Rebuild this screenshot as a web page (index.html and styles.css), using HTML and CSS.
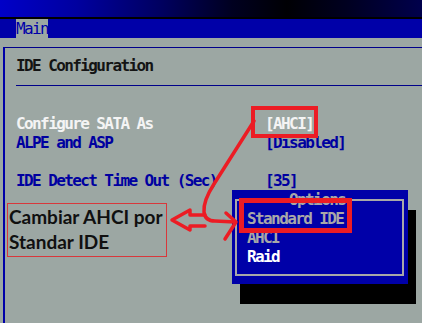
FILE: index.html
```html
<!DOCTYPE html>
<html lang="es">
<head>
<meta charset="utf-8">
<title>IDE Configuration</title>
<link rel="stylesheet" href="styles.css">
</head>
<body>
<div class="screen">
  <div class="titlebar"></div>
  <div class="menubar"><span class="tab">Main</span></div>
  <div class="content">
    <div class="panel">
      <div class="panel-head">IDE Configuration</div>
      <div class="rows">
        <div class="row"><span class="label sel">Configure SATA As</span><span class="value sel">[AHCI]</span></div>
        <div class="row"><span class="label">ALPE and ASP</span><span class="value">[Disabled]</span></div>
        <div class="row"></div>
        <div class="row"><span class="label">IDE Detect Time Out (Sec)</span><span class="value">[35]</span></div>
      </div>
    </div>
  </div>

  <div class="popup">
    <div class="frame">
      <span class="frame-title">Options</span>
      <div class="opt">Standard IDE</div>
      <div class="opt">AHCI</div>
      <div class="opt cur">Raid</div>
    </div>
  </div>

  <div class="note">Cambiar AHCI por<br>Standar IDE</div>

  <div class="mark mark-ahci"></div>
  <div class="mark mark-std"></div>

  <svg class="arrows" width="422" height="323" viewBox="0 0 422 323">
    <g fill="none" stroke="#ec1c24" stroke-width="3.5" stroke-linecap="round" stroke-linejoin="round">
      <path d="M254,121 L214,184 Q203,201 204,212 Q205,221 215,221 L235,222"/>
      <path d="M205,215 L190,215 L190,210 L172,220 L190,230 L190,226 L205,226"/>
      <path d="M226,213 L236,222 L225,239"/>
    </g>
  </svg>
</div>
</body>
</html>
```

FILE: styles.css
```css
* { box-sizing: border-box; }
html, body { margin: 0; padding: 0; }
body {
  width: 422px;
  height: 323px;
  overflow: hidden;
  background: #9ca7a3;
}
.screen {
  position: relative;
  width: 422px;
  height: 323px;
  background: #9ca7a3;
  font-family: "DejaVu Sans Mono", "Liberation Mono", monospace;
  font-weight: bold;
  font-size: 16px;
  letter-spacing: -1.6px;
  line-height: 19px;
}
.titlebar {
  height: 19px;
  border-bottom: 2px solid #000;
  background: linear-gradient(to right, #0000c8 0%, #0000a0 18%, #000060 38%, #000020 55%, #000004 68%, #000020 82%, #00004c 100%);
}
.menubar {
  height: 19px;
  background: #0000a8;
  padding-left: 16px;
  display: flex;
}
.tab {
  background: #9ca7a3;
  color: #0000a8;
  width: 32px;
  display: block;
  font-weight: normal;
}
.content {
  padding: 9px 0 0 3px;
}
.panel {
  border-top: 1px solid #00008a;
  border-left: 2px solid #0000a8;
  height: 280px;
}
.panel-head {
  margin-left: 11px;
  padding: 8px 0 10px;
  border-bottom: 1px solid #00008a;
  color: #141414;
}
.rows {
  margin: 28px 0 0 11px;
}
.row {
  height: 19px;
  display: flex;
  color: #0000a0;
}
.label {
  width: 249px;
}
.sel { color: #f4f4f4; }

.popup {
  position: absolute;
  left: 232px;
  top: 190px;
  width: 176px;
  height: 94px;
  background: #0000a8;
  box-shadow: 8px 20px 0 #000;
  padding: 9px 4px 8px 3px;
}
.frame {
  position: relative;
  height: 100%;
  border: 2px solid #a8a8a8;
  padding: 8px 0 0 10px;
  color: #a8a8a8;
}
.frame-title {
  position: absolute;
  top: -11px;
  left: 49px;
  padding: 0 3px;
  background: #0000a8;
  color: #a8a8a8;
}
.opt { height: 19px; }
.opt.cur { color: #ffffff; }

.note {
  position: absolute;
  left: 7px;
  top: 203px;
  width: 160px;
  height: 54px;
  border: 1px solid #d8383c;
  padding: 0 0 0 1px;
  font-family: Lato, "Open Sans", sans-serif;
  font-weight: bold;
  font-size: 19px;
  line-height: 25px;
  letter-spacing: 0;
  white-space: nowrap;
  color: #101010;
}
.mark {
  position: absolute;
  border: 4px solid #ec1c24;
}
.mark-ahci {
  left: 251px;
  top: 106px;
  width: 67px;
  height: 32px;
}
.mark-std {
  left: 239px;
  top: 198px;
  width: 113px;
  height: 35px;
  border-width: 5px;
}
.arrows {
  position: absolute;
  left: 0;
  top: 0;
  pointer-events: none;
}
```
